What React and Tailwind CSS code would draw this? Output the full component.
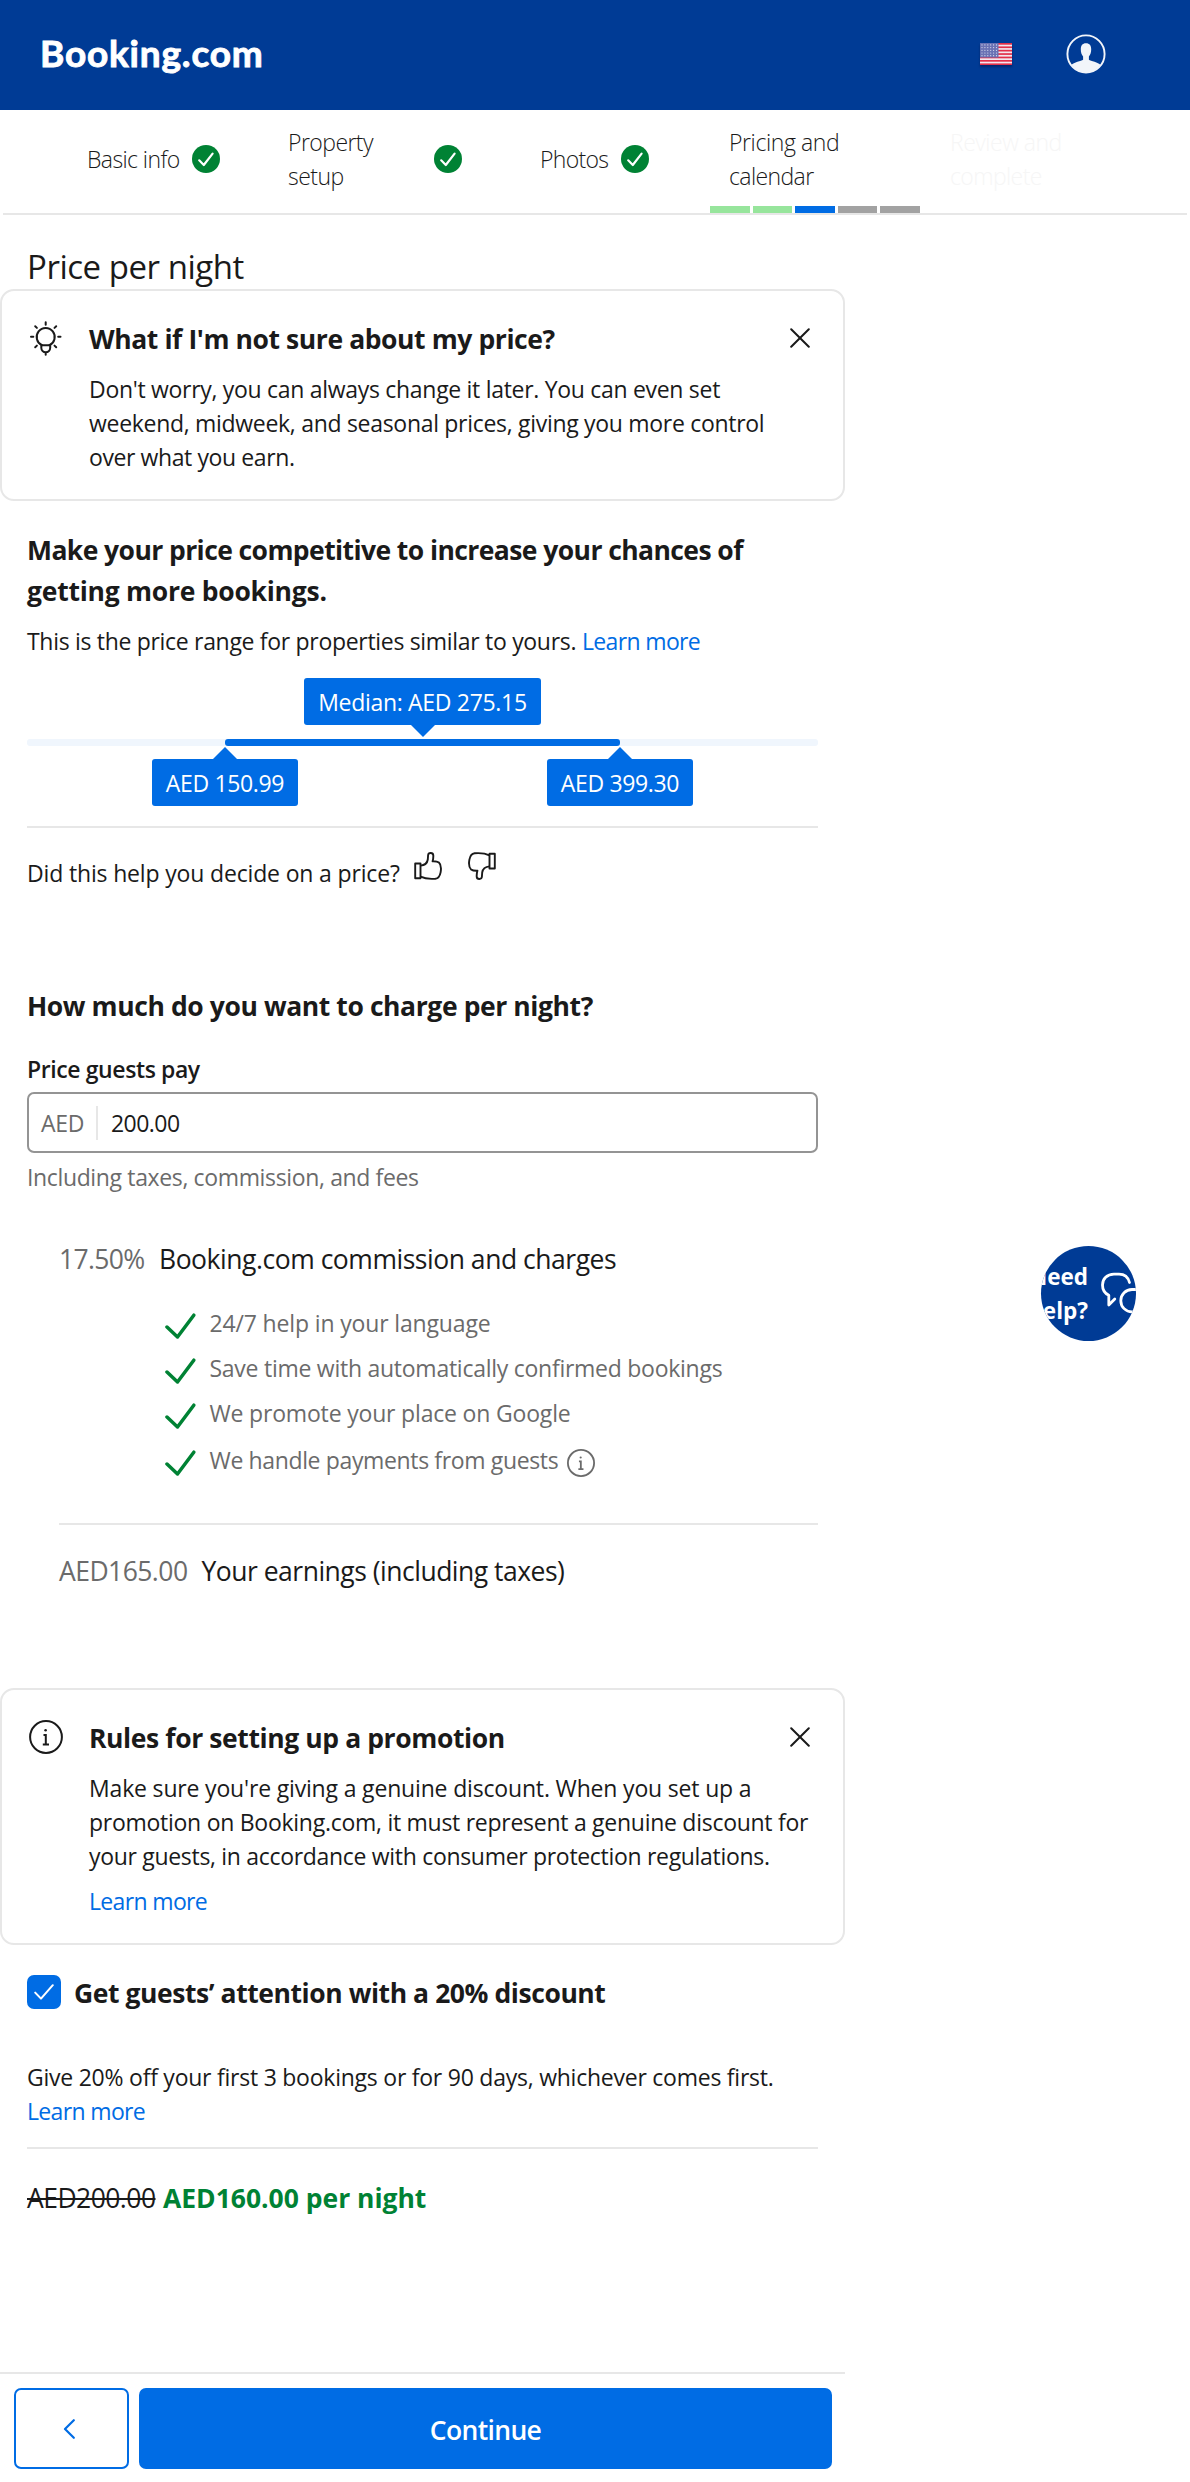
import React from "react";

const body = "text-[23px] leading-[34px]";
const large = "text-[26.5px] leading-[41px]";

function Lines({ items, className }) {
  return (
    <p className={className}>
      {items.map(([text, tracking]) => (
        <span key={text} className={`block whitespace-nowrap ${tracking}`}>{text}</span>
      ))}
    </p>
  );
}

function CheckBadge() {
  return (
    <svg viewBox="0 0 28 28" className="size-7 shrink-0">
      <circle cx="14" cy="14" r="14" fill="#008234" />
      <path d="M7.2 15.3 11.8 20 20.6 8.6" fill="none" stroke="#fff" strokeWidth="2.2" strokeLinecap="round" strokeLinejoin="round" />
    </svg>
  );
}

function Flag() {
  return (
    <svg viewBox="0 0 32 22" className="w-8 h-[22px] shadow-[0_2px_2px_rgba(0,0,40,0.35)]">
      <rect width="32" height="22" fill="#f3e6ee" />
      {[0, 1, 2, 3, 4, 5, 6].map((n) => (
        <rect key={n} y={n * 3.4} width="32" height="1.7" fill="#e2304a" />
      ))}
      <rect width="18.5" height="14.5" fill="#6a72b4" />
      {[0, 1, 2, 3, 4].map((r) =>
        [0, 1, 2, 3, 4, 5].map((c) => (
          <circle key={`${r}-${c}`} cx={2 + c * 2.9} cy={1.9 + r * 2.7} r="0.6" fill="#dcdff0" />
        ))
      )}
    </svg>
  );
}

function Avatar() {
  return (
    <svg viewBox="0 0 40 40" className="size-10">
      <circle cx="20" cy="20" r="18.6" fill="none" stroke="#f2f5fa" strokeWidth="1.9" />
      <path d="M20 9.2c3.6 0 5.2 2.3 5.2 6 0 3-.8 5.600-2.300 7.300v3.200c1.700 1.600 9.500 2.300 11.600 5.200A18.600 18.600 0 0 1 20 38.600 18.600 18.600 0 0 1 5.500 30.900c2.100-2.900 9.900-3.600 11.600-5.200v-3.200c-1.500-1.700-2.300-4.300-2.300-7.300 0-3.700 1.600-6 5.200-6z" fill="#f2f5fa" />
    </svg>
  );
}

function Bulb() {
  return (
    <svg viewBox="0 0 34 36" className="w-[34px] h-9" fill="none" stroke="#1a1a1a" strokeWidth="2" strokeLinecap="round">
      <path d="M13 24.200A9 9 0 1 1 20.400 24.200" />
      <path d="M12.300 24.300h8.900v2.500a4.450 4.450 0 0 1-8.900 0zM16.700 31.500v2.200" />
      <path d="M16.700 1.300v2.400M2 15.800h2.300M29.200 15.800h2.300M6.200 5.200l1.700 1.700M27.200 5.200l-1.700 1.700M6.200 26.300l1.700-1.700M27.200 26.300l-1.700-1.700" />
    </svg>
  );
}

function Info({ className, color, width }) {
  return (
    <svg viewBox="0 0 34 34" className={className} fill="none" stroke={color} strokeWidth={width}>
      <circle cx="17" cy="17" r="15.9" />
      <path d="M14.500 15h2.300v9.300M13.800 24.400h6.200" />
      <circle cx="16.600" cy="10.300" r="1.300" fill={color} stroke="none" />
    </svg>
  );
}

function Close() {
  return (
    <svg viewBox="0 0 20 20" className="size-5" stroke="#1a1a1a" strokeWidth="2" strokeLinecap="round">
      <path d="M1.200 1.200 18.800 18.800M18.800 1.200 1.200 18.800" />
    </svg>
  );
}

function Thumb({ className }) {
  return (
    <svg viewBox="0 0 28 28" className={className} fill="none" stroke="#1a1a1a" strokeWidth="1.900" strokeLinejoin="round">
      <path d="M1.200 11.500h5.300v14.700H1.200z" />
      <path d="M6.500 13.600c4-.3 6.700-2.200 7.300-6.100l.3-4.300c.2-2.900 5-2.900 5.200.2.100 2.300-.2 4.200-.7 5.900 2.600-.1 4.700.1 6.300 1.300 2.600 2.200 2.300 6.300 1.700 9.700-.8 4.100-2.400 6.100-5.200 6.400-5.200.4-10.200.2-14.900-2" />
    </svg>
  );
}

function GreenCheck() {
  return (
    <svg viewBox="0 0 31 26" className="w-[31px] h-[26px] mt-[7px]" fill="none" stroke="#008234" strokeWidth="3.500" strokeLinecap="round" strokeLinejoin="round">
      <path d="M2 14 12.500 24 28.800 2.200" />
    </svg>
  );
}

const bars = ["bg-[#97e59c]", "bg-[#97e59c]", "bg-[#006ce4]", "bg-[#a2a2a2]", "bg-[#a2a2a2]"];

const perks = [
  ["24/7 help in your language", "tracking-[-0.15px]"],
  ["Save time with automatically confirmed bookings", "tracking-[-0.26px]"],
  ["We promote your place on Google", "tracking-[-0.18px]"],
];

export default function App() {
  return (
    <div className="relative h-[2482px] w-[1190px] overflow-hidden bg-white font-['Open_Sans','Noto_Sans',sans-serif] text-[#1a1a1a]">
      <header className="flex h-[110px] items-center justify-between bg-[#003b95] pl-[40px] pr-[84px]">
        <div className="mt-[-4px] font-[Lato,sans-serif] text-[37px] leading-[44px] font-bold tracking-[0.8px] text-white [-webkit-text-stroke:0.9px_white]">Booking.com</div>
        <div className="mt-[-3px] flex items-center gap-[54px]">
          <Flag />
          <Avatar />
        </div>
      </header>

      <nav className={`mx-[3px] h-[105px] border-b-2 border-[#e7e7e7] pl-[84px] pt-[15px] font-light ${body}`}>
        <div className="flex h-[68px] items-center">
          <div className="flex w-[201px] items-center gap-[13px]">
            <span className="w-[92px] whitespace-nowrap tracking-[-0.6px]">Basic info</span>
            <CheckBadge />
          </div>
          <div className="flex w-[252px] items-center gap-[61px]">
            <Lines className="w-[85px]" items={[["Property", "tracking-[-0.55px]"], ["setup", "tracking-[-0.5px]"]]} />
            <CheckBadge />
          </div>
          <div className="flex w-[189px] items-center gap-[13px]">
            <span className="w-[68px] tracking-[-0.7px]">Photos</span>
            <CheckBadge />
          </div>
          <Lines className="w-[221px]" items={[["Pricing and", "tracking-[-0.4px]"], ["calendar", "tracking-[-0.6px]"]]} />
          <Lines className="text-[#f6f6f6]" items={[["Review and", "tracking-[-0.5px]"], ["complete", "tracking-[-0.6px]"]]} />
        </div>
        <div className="ml-[623px] mt-[13px] flex w-[210px] gap-[3px]">
          {bars.map((color, i) => (
            <div key={i} className={`h-[7px] flex-1 ${color}`} />
          ))}
        </div>
      </nav>

      <main className="w-[845px]">
        <h1 className="ml-[27px] mt-[31px] h-[41px] text-[33px] leading-[42px] tracking-[-0.47px]">Price per night</h1>

        <section className="mt-[2px] flex h-[212px] rounded-[14px] border-2 border-[#e7e7e7] pl-[27px] pr-[33px] pt-[28px]">
          <div className="mt-[2px] w-[60px]"><Bulb /></div>
          <div className="flex-1">
            <h2 className={`font-bold tracking-[-0.41px] ${large}`}>What if I'm not sure about my price?</h2>
            <Lines
              className={`mt-[12px] ${body}`}
              items={[
                ["Don't worry, you can always change it later. You can even set", "tracking-[-0.3px]"],
                ["weekend, midweek, and seasonal prices, giving you more control", "tracking-[-0.3px]"],
                ["over what you earn.", "tracking-[-0.4px]"],
              ]}
            />
          </div>
          <div className="mt-[9px]"><Close /></div>
        </section>

        <div className="px-[27px]">
          <Lines
            className={`mt-[29px] font-bold ${large}`}
            items={[
              ["Make your price competitive to increase your chances of", "tracking-[-0.58px]"],
              ["getting more bookings.", "tracking-[-0.25px]"],
            ]}
          />
          <p className={`mt-[12px] flex gap-[6px] whitespace-nowrap ${body}`}>
            <span className="w-[549px] tracking-[-0.31px]">This is the price range for properties similar to yours.</span>
            <a className="tracking-[-0.65px] text-[#006ce4]">Learn more</a>
          </p>

          <div className={`mt-[20px] flex h-[128px] flex-col whitespace-nowrap text-white ${body}`}>
            <div className="mx-auto flex h-[47px] w-[237px] justify-center rounded-[3px] bg-[#006ce4] pt-[7px] tracking-[-0.31px]">Median: AED 275.15</div>
            <svg viewBox="0 0 24 12" className="mx-auto h-3 w-6" fill="#006ce4"><path d="M0 0h24L12 12z" /></svg>
            <div className="mt-[1.5px] h-[7px] rounded-[3px] bg-[#f0f6fd] px-[198px]">
              <div className="h-full rounded-[3px] bg-[#006ce4]" />
            </div>
            <div className="mt-[1.5px] flex justify-between px-[125px]">
              {["AED 150.99", "AED 399.30"].map((price) => (
                <div key={price} className="flex w-[146px] flex-col items-center">
                  <svg viewBox="0 0 24 12" className="h-3 w-6" fill="#006ce4"><path d="M0 12h24L12 0z" /></svg>
                  <div className="flex h-[47px] w-full justify-center rounded-[3px] bg-[#006ce4] pt-[7px] tracking-[-0.34px]">{price}</div>
                </div>
              ))}
            </div>
          </div>

          <hr className="mt-[20px] border-t-2 border-[#e7e7e7]" />
          <div className={`mt-[24px] flex h-[38px] ${body}`}>
            <span className="mt-1 w-[387px] whitespace-nowrap tracking-[-0.16px]">Did this help you decide on a price?</span>
            <Thumb className="size-7" />
            <Thumb className="ml-[26px] size-7 rotate-180" />
          </div>

          <h2 className={`mt-[96px] font-bold tracking-[-0.41px] ${large}`}>How much do you want to charge per night?</h2>
          <label className={`mt-[25px] block font-semibold tracking-[-0.4px] ${body}`}>Price guests pay</label>
          <div className={`mt-[6px] flex h-[61px] items-center rounded-[7px] border-2 border-[#949494] pl-3 ${body}`}>
            <span className="w-[57px] border-r-2 border-[#e7e7e7] tracking-[-0.34px] text-[#6b6b6b]">AED</span>
            <span className="ml-[13px] tracking-[-0.55px]">200.00</span>
          </div>
          <p className={`mt-[7px] tracking-[-0.36px] text-[#6b6b6b] ${body}`}>Including taxes, commission, and fees</p>

          <div className="pl-[32px]">
            <p className={`mt-[45px] flex ${large}`}>
              <span className="w-[100px] tracking-[-0.65px] text-[#6b6b6b]">17.50%</span>
              <span className="tracking-[-0.47px]">Booking.com commission and charges</span>
            </p>
            <ul className={`ml-[106px] mt-[26px] text-[#6b6b6b] ${body}`}>
              {perks.map(([text, tracking]) => (
                <li key={text} className="mb-[11px] flex gap-[13.5px]">
                  <GreenCheck />
                  <span className={tracking}>{text}</span>
                </li>
              ))}
              <li className="flex gap-[13.5px] pt-[2px]">
                <GreenCheck />
                <span className="w-[344px] whitespace-nowrap tracking-[-0.36px]">We handle payments from guests</span>
                <Info className="mt-[6px] size-7" color="#6b6b6b" width="2.2" />
              </li>
            </ul>
            <hr className="mt-[46px] border-t-2 border-[#e7e7e7]" />
            <p className={`mt-[26px] flex ${large}`}>
              <span className="w-[142.5px] tracking-[-0.55px] text-[#6b6b6b]">AED165.00</span>
              <span className="tracking-[-0.5px]">Your earnings (including taxes)</span>
            </p>
          </div>
        </div>

        <section className="mt-[96px] flex h-[257px] rounded-[14px] border-2 border-[#e7e7e7] pl-[27px] pr-[33px] pt-[28px]">
          <div className="mt-[2px] w-[60px]"><Info className="size-[34px]" color="#1a1a1a" width="2" /></div>
          <div className="min-w-0 flex-1">
            <h2 className={`font-bold tracking-[-0.4px] ${large}`}>Rules for setting up a promotion</h2>
            <Lines
              className={`mt-[12px] ${body}`}
              items={[
                ["Make sure you're giving a genuine discount. When you set up a", "tracking-[-0.17px]"],
                ["promotion on Booking.com, it must represent a genuine discount for", "tracking-[-0.27px]"],
                ["your guests, in accordance with consumer protection regulations.", "tracking-[-0.31px]"],
              ]}
            />
            <a className={`mt-[11px] block tracking-[-0.65px] text-[#006ce4] ${body}`}>Learn more</a>
          </div>
          <div className="mt-[9px]"><Close /></div>
        </section>

        <div className="px-[27px]">
          <div className="mt-[28px] flex gap-[13px]">
            <span className="mt-[2px] flex size-[34px] items-center justify-center rounded-[7px] bg-[#006ce4]">
              <svg viewBox="0 0 20 16" className="h-4 w-5" fill="none" stroke="#fff" strokeWidth="2" strokeLinecap="round" strokeLinejoin="round">
                <path d="M1.200 8.600 7 14.600 18.800 1.200" />
              </svg>
            </span>
            <h2 className={`font-bold tracking-[-0.43px] ${large}`}>Get guests’ attention with a 20% discount</h2>
          </div>
          <p className={`mt-[46px] whitespace-nowrap tracking-[-0.24px] ${body}`}>Give 20% off your first 3 bookings or for 90 days, whichever comes first.</p>
          <a className={`block tracking-[-0.65px] text-[#006ce4] ${body}`}>Learn more</a>
          <hr className="mt-[19px] border-t-2 border-[#e7e7e7]" />
          <p className={`mt-[29px] flex gap-[7px] whitespace-nowrap ${large}`}>
            <span className="w-[129px] tracking-[-0.55px] line-through decoration-2">AED200.00</span>
            <span className="font-bold tracking-[-0.02px] text-[#008234]">AED160.00 per night</span>
          </p>
        </div>

        <footer className="mt-[153px] flex gap-[10px] border-t-2 border-[#e7e7e7] pl-[14px] pr-[13px] pt-[14px]">
          <button className="flex h-[81px] w-[115px] items-center justify-center rounded-[7px] border-2 border-[#006ce4]">
            <svg viewBox="0 0 12 20" className="mr-[5px] h-5 w-3" fill="none" stroke="#006ce4" strokeWidth="2.200" strokeLinecap="round" strokeLinejoin="round">
              <path d="M10.800 1.200 2 10l8.800 8.800" />
            </svg>
          </button>
          <button className={`h-[81px] flex-1 rounded-[7px] bg-[#006ce4] pt-1 font-semibold tracking-[-0.65px] text-white ${large}`}>Continue</button>
        </footer>
      </main>

      <aside className="absolute left-[1041px] top-[1246px] flex size-[95px] items-center justify-center overflow-hidden rounded-full bg-[#003b95]">
        <div className="flex shrink-0 items-center gap-[13px]">
          <p className="w-[62px] text-right text-[22.5px] leading-[34px] font-bold text-white">Need<br />help?</p>
          <svg viewBox="0 0 50 44" className="h-[44px] w-[50px] shrink-0" fill="none" stroke="#fff" strokeWidth="2.800" strokeLinecap="round" strokeLinejoin="round">
            <path d="M28.500 10.500C27 5 23 2.200 18 2.200h-5C6 2.200 1.500 7 1.500 13c0 5 2.500 8.500 6.300 10.300V33l6-6" />
            <path d="M40 17.500h-9a11.200 11.200 0 0 0 0 22.400h4l7 4" />
          </svg>
        </div>
      </aside>
    </div>
  );
}
